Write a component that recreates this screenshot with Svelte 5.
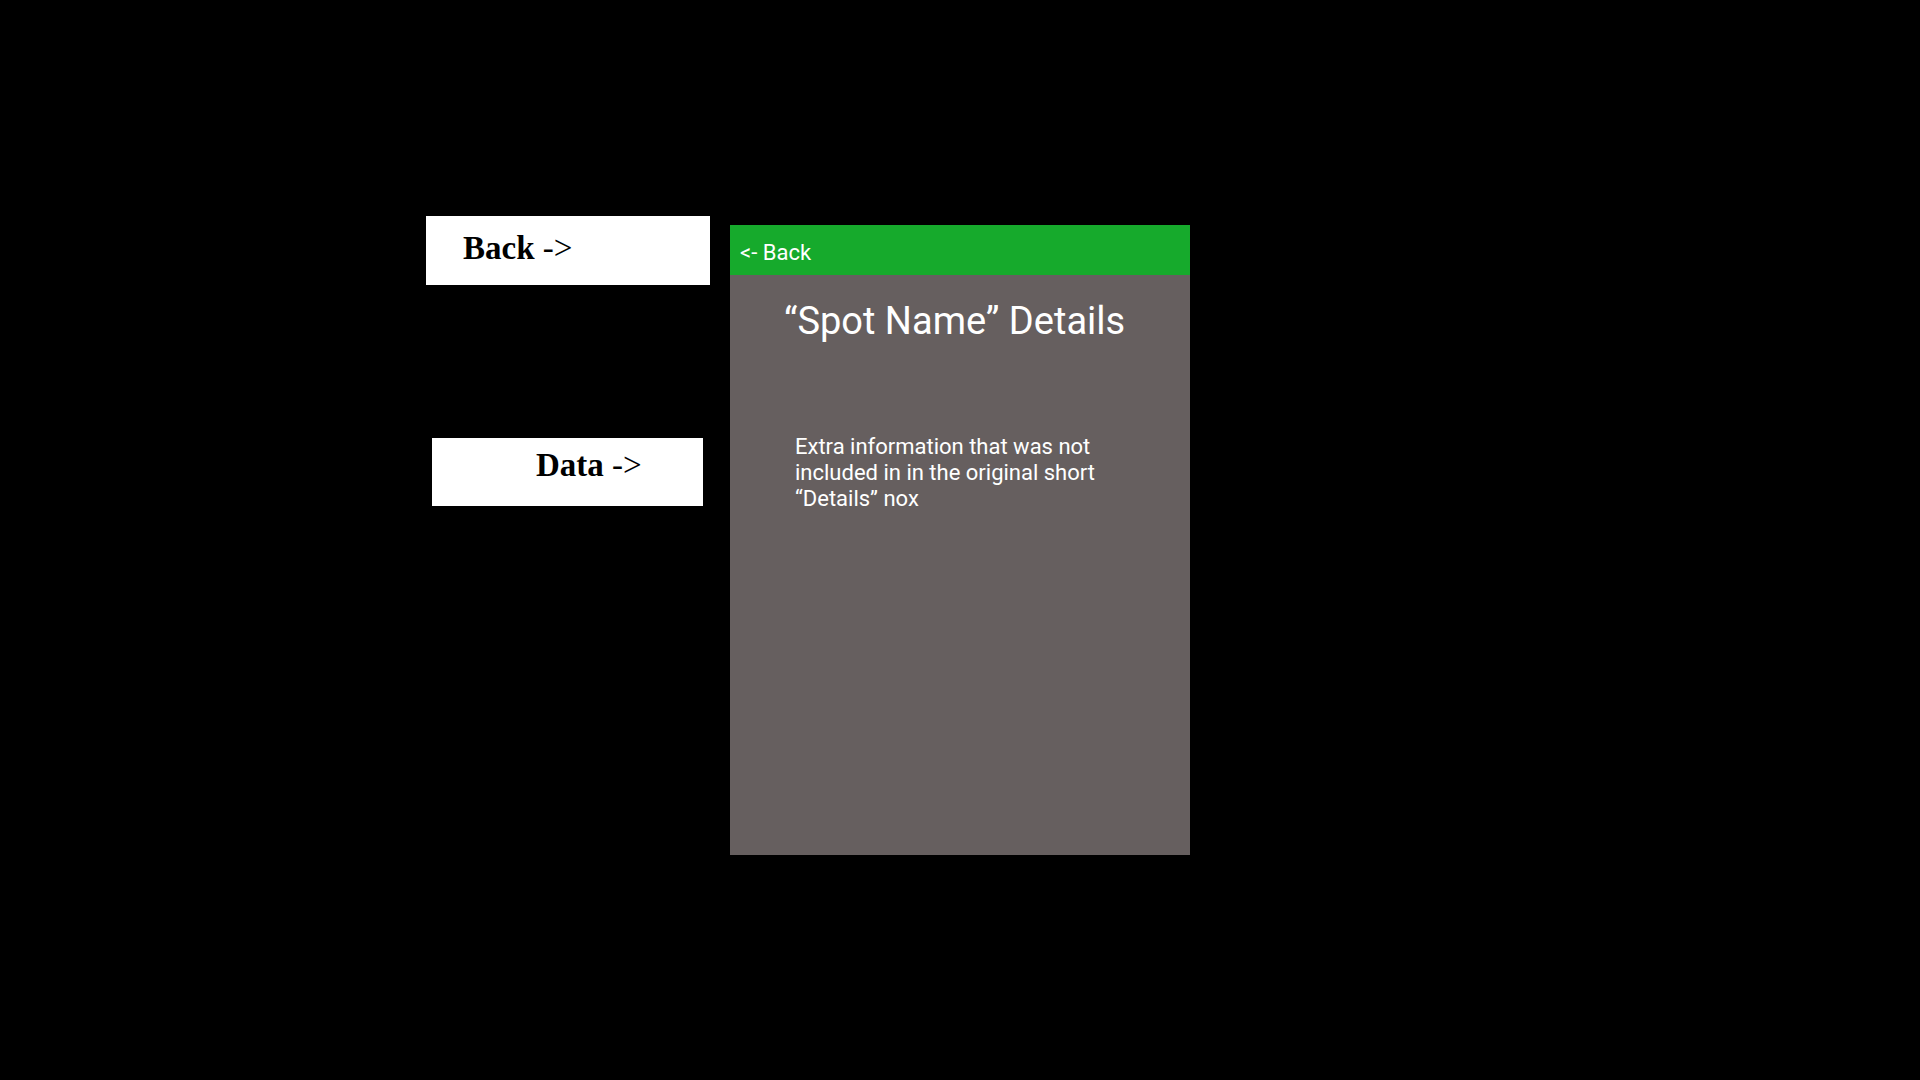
<script>
  const notes = [
    { label: 'Back', kind: 'back' },
    { label: 'Data', kind: 'data' }
  ];
</script>

<main>
  <aside aria-label="Annotations">
    {#each notes as note}
      <p class="note {note.kind}"><b>{note.label}</b> -&gt;</p>
    {/each}
  </aside>

  <section class="screen">
    <header>
      <button type="button">&lt;- Back</button>
    </header>
    <h1>“Spot Name” Details</h1>
    <p class="info">Extra information that was not included in in the original short “Details” nox</p>
  </section>
</main>

<style>
  :global(body) {
    margin: 0;
    background: #000;
  }

  main {
    box-sizing: border-box;
    min-height: 100vh;
    display: grid;
    grid-template-columns: minmax(300px, 1fr) minmax(0, 460px) 1fr;
    align-content: center;
    padding-bottom: 9px;
  }

  aside {
    display: flex;
    flex-direction: column;
    align-items: flex-end;
    gap: 153px;
  }

  .note {
    box-sizing: border-box;
    margin: 0;
    background: #fff;
    color: #000;
    font: 400 33px/36px "Liberation Serif", "Times New Roman", serif;
  }

  .back {
    width: 284px;
    margin-right: 20px;
    padding: 14px 37px 19px;
  }

  .data {
    width: 271px;
    margin-right: 27px;
    padding: 9px 60px 23px 104px;
  }

  .screen {
    box-sizing: border-box;
    min-height: 630px;
    margin-top: 9px;
    background: #665f5f;
    color: #fff;
    font-family: Roboto, sans-serif;
  }

  header {
    display: flex;
    align-items: center;
    min-height: 50px;
    padding: 6px 10px 0;
    box-sizing: border-box;
    background: #16aa2c;
  }

  button {
    padding: 0;
    border: 0;
    background: none;
    color: inherit;
    font: 400 22px/26px Roboto, sans-serif;
    cursor: pointer;
  }

  h1 {
    margin: 24px 54px 0;
    font-size: 38px;
    font-weight: 400;
    line-height: 44px;
  }

  .info {
    margin: 91px 65px 0;
    font-size: 22px;
    line-height: 26px;
  }
</style>
